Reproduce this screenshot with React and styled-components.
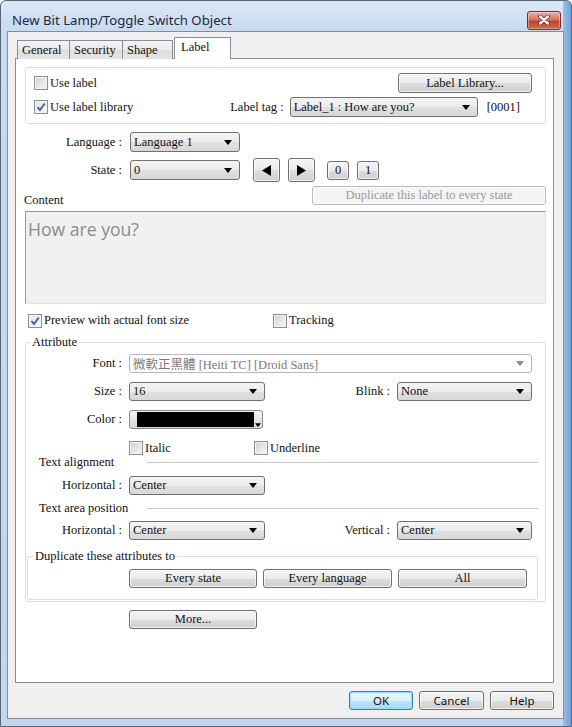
import React from 'react';
import styled, { createGlobalStyle } from 'styled-components';

const GlobalStyle = createGlobalStyle`
  html, body {
    margin: 0;
    padding: 0;
    background: #ffffff;
  }
  body {
    width: 572px;
    height: 727px;
    overflow: hidden;
  }
`;

const serif = `"Liberation Serif", "Times New Roman", "Noto Sans CJK TC", serif`;
const sans = `"Noto Sans", "Open Sans", sans-serif`;

/* ---------- window frame ---------- */

const Window = styled.div`
  box-sizing: border-box;
  width: 572px;
  height: 727px;
  display: flex;
  flex-direction: column;
  padding: 0 7px 7px 6px;
  border: 1px solid #56657a;
  border-radius: 6px 6px 0 0;
  background:
    linear-gradient(90deg, rgba(0, 0, 0, 0) calc(100% - 8px), #9fc0e6 calc(100% - 8px), #6f9fd9 100%),
    linear-gradient(180deg, #dce8f6 0, #c8daef 30px, #c2d6ee 100%);
  font-family: ${serif};
  font-size: 12.5px;
  color: #111;
`;

const TitleBar = styled.div`
  height: 30px;
  flex: none;
  box-sizing: border-box;
  padding: 8px 3px 0 5px;
  display: flex;
  align-items: center;
  justify-content: space-between;
`;

const Title = styled.span`
  font-family: ${sans};
  font-size: 13.2px;
  color: #1b2a3a;
  white-space: nowrap;
`;

const CloseButton = styled.div`
  width: 34px;
  height: 19px;
  box-sizing: border-box;
  border: 1px solid #7b2c22;
  border-radius: 3px;
  display: flex;
  align-items: center;
  justify-content: center;
  background: linear-gradient(180deg, #eab0a2 0%, #d9755f 45%, #c4452e 55%, #cf6a4c 100%);
  box-shadow: inset 0 0 0 1px rgba(255, 255, 255, 0.35);
`;

const Client = styled.div`
  flex: 1;
  display: flex;
  flex-direction: column;
  border: 1px solid #7d8ea3;
  background: #f0f0f0;
  padding: 5px 9px 8px 7px;
`;

/* ---------- tabs ---------- */

const TabStrip = styled.div`
  height: 22px;
  flex: none;
  display: flex;
  align-items: flex-end;
  padding-left: 2px;
  margin-bottom: -1px;
`;

const Tab = styled.div`
  box-sizing: border-box;
  width: ${p => p.$w}px;
  height: ${p => (p.$active ? 22 : 19)}px;
  margin-left: ${p => (p.$active ? 1 : -1)}px;
  padding: ${p => (p.$active ? '2px 0 0 6px' : '2px 0 0 4px')};
  border: 1px solid #898c95;
  border-bottom: none;
  background: ${p => (p.$active ? '#ffffff' : 'linear-gradient(180deg, #f3f3f3 0%, #ebebeb 50%, #dedede 51%, #e5e5e5 100%)')};
  position: ${p => (p.$active ? 'relative' : 'static')};
  z-index: ${p => (p.$active ? 1 : 0)};
  white-space: nowrap;
  &:first-child {
    margin-left: 0;
  }
`;

const Panel = styled.div`
  flex: 1;
  display: flex;
  flex-direction: column;
  border: 1px solid #898c95;
  background: #ffffff;
  padding: 8px 7px 0 9px;
`;

/* ---------- common controls ---------- */

const Row = styled.div`
  display: flex;
  align-items: center;
  flex: none;
  margin-top: ${p => p.$mt || 0}px;
  height: ${p => (p.$h ? `${p.$h}px` : 'auto')};
  padding-right: ${p => p.$pr || 0}px;
  justify-content: ${p => p.$between ? 'space-between' : 'flex-start'};
`;

const FieldLabel = styled.span`
  flex: none;
  width: ${p => (p.$w ? `${p.$w}px` : 'auto')};
  margin-right: ${p => (p.$gap ?? 7)}px;
  text-align: right;
  white-space: nowrap;
`;

const Spacer = styled.div`
  flex: 1;
`;

const SelectBox = styled.div`
  box-sizing: border-box;
  width: ${p => p.$w}px;
  height: ${p => p.$h || 19}px;
  flex: none;
  display: flex;
  align-items: center;
  padding: 0 7px 0 3px;
  border: 1px solid ${p => (p.$disabled ? '#b4b8bc' : '#707070')};
  border-radius: 3px;
  background: ${p => (p.$disabled ? '#ffffff' : 'linear-gradient(180deg, #f4f4f4 0%, #ececec 50%, #e0e0e0 51%, #d8d8d8 100%)')};
  color: ${p => (p.$disabled ? '#7a7a7a' : '#111')};
`;

const SelectText = styled.span`
  flex: 1;
  white-space: nowrap;
  overflow: hidden;
`;

const Caret = ({ color = '#000', w = 8, h = 5 }) => (
  <svg width={w} height={h} viewBox="0 0 8 5">
    <path d="M0 0h8L4 5z" fill={color} />
  </svg>
);

const Select = ({ width, height, disabled, children }) => (
  <SelectBox $w={width} $h={height} $disabled={disabled}>
    <SelectText>{children}</SelectText>
    <Caret color={disabled ? '#8a8a8a' : '#000'} />
  </SelectBox>
);

const Btn = styled.button`
  box-sizing: border-box;
  width: ${p => p.$w}px;
  height: ${p => p.$h || 19}px;
  flex: none;
  padding: 0;
  margin: 0;
  font-family: ${serif};
  font-size: 12.5px;
  color: ${p => (p.disabled ? '#9a9a9a' : '#111')};
  border: 1px solid ${p => (p.disabled ? '#b8bcc0' : '#707070')};
  border-radius: 3px;
  background: ${p => (p.disabled ? '#f4f4f4' : 'linear-gradient(180deg, #f4f4f4 0%, #ebebeb 50%, #dddddd 51%, #cfcfcf 100%)')};
  box-shadow: inset 0 0 0 1px rgba(255, 255, 255, 0.7);
  display: flex;
  align-items: center;
  justify-content: center;
`;

const DialogBtn = styled(Btn)`
  font-family: ${sans};
  font-size: 11.5px;
  border-color: ${p => (p.$default ? '#3c7fb1' : '#707070')};
  background: ${p => (p.$default
    ? 'linear-gradient(180deg, #eaf6fd 0%, #d9f0fc 50%, #bee6fd 51%, #a7d9f5 100%)'
    : 'linear-gradient(180deg, #f2f2f2 0%, #ebebeb 50%, #dddddd 51%, #cfcfcf 100%)')};
  box-shadow: inset 0 0 0 1px ${p => (p.$default ? '#9ed6f5' : 'rgba(255,255,255,0.7)')};
`;

const Arrow = ({ dir }) => (
  <svg width="9" height="11" viewBox="0 0 9 11">
    <path d={dir === 'left' ? 'M9 0v11L0 5.5z' : 'M0 0v11l9-5.5z'} fill="#000" />
  </svg>
);

const BoxMark = styled.span`
  box-sizing: border-box;
  width: 14px;
  height: 14px;
  flex: none;
  margin-right: 2px;
  border: 1px solid #8e8f8f;
  background: ${p => (p.$checked
    ? 'linear-gradient(135deg, #e4e6ea 0%, #f7f7f7 100%)'
    : 'linear-gradient(135deg, #cfcfcf 0%, #e9e9e9 60%, #f4f4f4 100%)')};
  box-shadow: inset 0 0 0 1px #f4f4f4;
  display: flex;
  align-items: center;
  justify-content: center;
`;

const CheckWrap = styled.span`
  display: inline-flex;
  align-items: center;
  flex: none;
  width: ${p => (p.$w ? `${p.$w}px` : 'auto')};
  white-space: nowrap;
`;

const Check = ({ checked, width, children }) => (
  <CheckWrap $w={width}>
    <BoxMark $checked={checked}>
      {checked && (
        <svg width="10" height="10" viewBox="0 0 10 10">
          <path d="M1.5 5.2 L4 8 L8.8 1.5" fill="none" stroke="#4a5e96" strokeWidth="1.9" />
        </svg>
      )}
    </BoxMark>
    {children}
  </CheckWrap>
);

/* ---------- groups ---------- */

const TopGroup = styled.div`
  flex: none;
  border: 1px solid #d5dfe5;
  border-radius: 3px;
  padding: 5px 13px 6px 8px;
  display: flex;
  flex-direction: column;
  gap: 4px;
`;

const Group = styled.fieldset`
  margin: ${p => p.$m || '0'};
  padding: ${p => p.$p || '0'};
  border: 1px solid #d5dfe5;
  border-radius: 3px;
  min-width: 0;
`;

const Legend = styled.legend`
  margin-left: ${p => p.$ml || 4}px;
  padding: 0 2px;
  line-height: 16px;
`;

const ContentBox = styled.div`
  flex: none;
  margin-top: 6px;
  height: 93px;
  box-sizing: border-box;
  border: 1px solid #e2e2e2;
  border-top-color: #9a9a9a;
  border-left-color: #9a9a9a;
  background: #f0f0f0;
  padding: 5px 2px;
  font-family: "Open Sans", "Noto Sans", sans-serif;
  font-size: 17.6px;
  line-height: 24px;
  color: #8c8c8c;
`;

const SectionHead = styled.div`
  display: flex;
  align-items: center;
  height: 15px;
  margin-top: ${p => p.$mt || 0}px;
`;

const SectionTitle = styled.span`
  width: 108px;
  flex: none;
  margin-left: 13px;
  white-space: nowrap;
`;

const SectionLine = styled.div`
  flex: 1;
  height: 0;
  margin-right: 7px;
  border-top: 1px solid #c8c8c8;
`;

const ColorBox = styled.div`
  box-sizing: border-box;
  width: 134px;
  height: 19px;
  flex: none;
  display: flex;
  padding: 1px 1px;
  border: 1px solid #8a8a8a;
  border-radius: 3px;
  background: linear-gradient(180deg, #f4f4f4 0%, #e4e4e4 50%, #d6d6d6 100%);
`;

const ColorFill = styled.div`
  flex: 1;
  margin-left: 6px;
  background: #000;
`;

const ColorCap = styled.div`
  width: 7px;
  display: flex;
  align-items: flex-end;
  justify-content: center;
`;

const Footer = styled.div`
  flex: none;
  display: flex;
  justify-content: flex-end;
  gap: 6px;
  margin-top: 8px;
`;

export default function App() {
  return (
    <>
      <GlobalStyle />
      <Window>
        <TitleBar>
          <Title>New Bit Lamp/Toggle Switch Object</Title>
          <CloseButton>
            <svg width="12" height="10" viewBox="0 0 12 10">
              <path d="M2 1.5 L10 8.5 M10 1.5 L2 8.5" stroke="#6b2418" strokeWidth="4" strokeLinecap="round" />
              <path d="M2 1.5 L10 8.5 M10 1.5 L2 8.5" stroke="#ffffff" strokeWidth="2.4" strokeLinecap="round" />
            </svg>
          </CloseButton>
        </TitleBar>

        <Client>
          <TabStrip>
            <Tab $w={53}>General</Tab>
            <Tab $w={54}>Security</Tab>
            <Tab $w={51}>Shape</Tab>
            <Tab $w={57} $active>Label</Tab>
          </TabStrip>

          <Panel>
            <TopGroup>
              <Row $h={20} $between>
                <Check>Use label</Check>
                <Btn $w={134} $h={20}>Label Library...</Btn>
              </Row>
              <Row $h={20} $between>
                <Check checked>Use label library</Check>
                <Row>
                  <FieldLabel $gap={6}>Label tag :</FieldLabel>
                  <Select width={188} height={20}>Label_1 : How are you?</Select>
                  <FieldLabel $gap={12} style={{ marginLeft: 9 }}>[0001]</FieldLabel>
                </Row>
              </Row>
            </TopGroup>

            <Row $mt={8} $h={20}>
              <FieldLabel $w={97} $gap={8}>Language :</FieldLabel>
              <Select width={110} height={20}>Language 1</Select>
            </Row>

            <Row $mt={6} $h={24}>
              <FieldLabel $w={97} $gap={8}>State :</FieldLabel>
              <Select width={110} height={20}>0</Select>
              <Btn $w={27} $h={24} style={{ marginLeft: 13 }}><Arrow dir="left" /></Btn>
              <Btn $w={27} $h={24} style={{ marginLeft: 8 }}><Arrow dir="right" /></Btn>
              <Btn $w={22} $h={19} style={{ marginLeft: 12 }}>0</Btn>
              <Btn $w={22} $h={19} style={{ marginLeft: 8 }}>1</Btn>
            </Row>

            <Row $mt={4} $between style={{ alignItems: 'flex-end' }}>
              <span style={{ marginLeft: -1, marginBottom: -3 }}>Content</span>
              <Btn $w={234} $h={19} disabled>Duplicate this label to every state</Btn>
            </Row>

            <ContentBox>How are you?</ContentBox>

            <Row $mt={9} $h={15} style={{ paddingLeft: 3 }}>
              <Check checked width={245}>Preview with actual font size</Check>
              <Check>Tracking</Check>
            </Row>

            <Group $m="6px 0 0 0" $p="0 0 1px 0">
              <Legend>Attribute</Legend>
              <Row $mt={4} $h={19} $pr={13}>
                <FieldLabel $w={96}>Font :</FieldLabel>
                <Select width={403} disabled>微軟正黑體 [Heiti TC] [Droid Sans]</Select>
              </Row>
              <Row $mt={9} $h={19} $pr={13}>
                <FieldLabel $w={96}>Size :</FieldLabel>
                <Select width={136}>16</Select>
                <Spacer />
                <FieldLabel>Blink :</FieldLabel>
                <Select width={135}>None</Select>
              </Row>
              <Row $mt={9} $h={19} $pr={13}>
                <FieldLabel $w={96}>Color :</FieldLabel>
                <ColorBox>
                  <ColorFill />
                  <ColorCap><Caret w={6} h={4} /></ColorCap>
                </ColorBox>
              </Row>
              <Row $mt={12} $h={14} style={{ paddingLeft: 103 }}>
                <Check width={125}>Italic</Check>
                <Check>Underline</Check>
              </Row>
              <SectionHead $mt={0}>
                <SectionTitle>Text alignment</SectionTitle>
                <SectionLine />
              </SectionHead>
              <Row $mt={6} $h={19} $pr={13}>
                <FieldLabel $w={96}>Horizontal :</FieldLabel>
                <Select width={136}>Center</Select>
              </Row>
              <SectionHead $mt={6}>
                <SectionTitle>Text area position</SectionTitle>
                <SectionLine />
              </SectionHead>
              <Row $mt={5} $h={19} $pr={13}>
                <FieldLabel $w={96}>Horizontal :</FieldLabel>
                <Select width={136}>Center</Select>
                <Spacer />
                <FieldLabel>Vertical :</FieldLabel>
                <Select width={135}>Center</Select>
              </Row>
              <Group $m="8px 7px 0 1px" $p="0 0 11px 0">
                <Legend $ml={5}>Duplicate these attributes to</Legend>
                <Row $mt={5} $h={19} style={{ paddingLeft: 101, gap: 6 }}>
                  <Btn $w={128}>Every state</Btn>
                  <Btn $w={129}>Every language</Btn>
                  <Btn $w={129}>All</Btn>
                </Row>
              </Group>
            </Group>

            <Row $mt={8} $h={19} style={{ paddingLeft: 104 }}>
              <Btn $w={128}>More...</Btn>
            </Row>
          </Panel>

          <Footer>
            <DialogBtn $w={64} $default>OK</DialogBtn>
            <DialogBtn $w={65}>Cancel</DialogBtn>
            <DialogBtn $w={64}>Help</DialogBtn>
          </Footer>
        </Client>
      </Window>
    </>
  );
}
